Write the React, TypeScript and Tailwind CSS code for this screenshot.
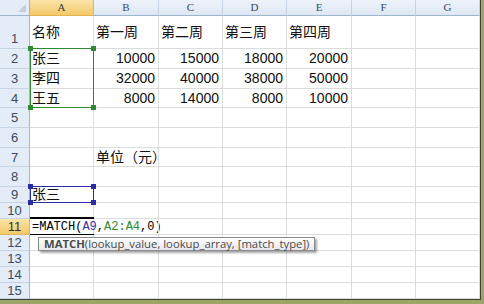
import React from 'react';

const colWidths = [30, 64, 65, 64, 64, 65, 64, 64];
const rowHeights = [33, 20, 20, 19, 20, 20, 19, 20, 16, 16, 16, 16, 16, 16, 16];
const letters = ['A', 'B', 'C', 'D', 'E', 'F', 'G'];

type Cell = { text: string; align?: 'left' | 'right' };

const data: Record<number, Record<number, Cell>> = {
  1: {
    0: { text: '名称' },
    1: { text: '第一周' },
    2: { text: '第二周' },
    3: { text: '第三周' },
    4: { text: '第四周' },
  },
  2: {
    0: { text: '张三' },
    1: { text: '10000', align: 'right' },
    2: { text: '15000', align: 'right' },
    3: { text: '18000', align: 'right' },
    4: { text: '20000', align: 'right' },
  },
  3: {
    0: { text: '李四' },
    1: { text: '32000', align: 'right' },
    2: { text: '40000', align: 'right' },
    3: { text: '38000', align: 'right' },
    4: { text: '50000', align: 'right' },
  },
  4: {
    0: { text: '王五' },
    1: { text: '8000', align: 'right' },
    2: { text: '14000', align: 'right' },
    3: { text: '8000', align: 'right' },
    4: { text: '10000', align: 'right' },
  },
  7: { 1: { text: '单位（元）' } },
  9: { 0: { text: '张三' } },
};

const cellFont = '"Liberation Sans", "Noto Sans CJK SC", sans-serif';

// little square at each corner of a reference range
const Handles: React.FC<{ color: string }> = ({ color }) => (
  <>
    <div className={`absolute -left-[3px] -top-[3px] w-[5px] h-[5px] ${color}`} />
    <div className={`absolute -right-[3px] -top-[3px] w-[5px] h-[5px] ${color}`} />
    <div className={`absolute -left-[3px] -bottom-[3px] w-[5px] h-[5px] ${color}`} />
    <div className={`absolute -right-[3px] -bottom-[3px] w-[5px] h-[5px] ${color}`} />
  </>
);

const App: React.FC = () => {
  return (
    <div className="w-[484px] h-[304px] bg-[#9ca468] overflow-hidden">
      <div className="w-[481px] h-[300px] bg-white border-r border-b border-[#3f4230]">
        <div
          className="grid"
          style={{
            gridTemplateColumns: colWidths.map((w) => `${w}px`).join(' '),
            gridTemplateRows: ['16px', ...rowHeights.map((h) => `${h}px`)].join(' '),
          }}
        >
          {/* corner */}
          <div className="col-start-1 row-start-1 bg-[#e4ecf7] border-r border-b border-[#9eb6ce] flex items-end justify-end pr-[3px] pb-[3px]">
            <svg width="8" height="8" viewBox="0 0 8 8">
              <polygon points="8,0 8,8 0,8" fill="#c3cfdd" />
            </svg>
          </div>
          {letters.map((l, i) => (
            <div
              key={l}
              className={`row-start-1 flex items-center justify-center border-r border-b text-[11px] ${
                i === 0
                  ? 'bg-gradient-to-b from-[#fbe3a8] to-[#f3c968] border-r-[#d9b66a] border-b-[#e5b250] text-[#3a3a3a]'
                  : 'bg-gradient-to-b from-[#eef3fa] to-[#dde7f3] border-r-[#c5d3e3] border-b-[#9eb6ce] text-[#3b4a60]'
              }`}
              style={{ gridColumn: i + 2, fontFamily: '"Liberation Serif", serif' }}
            >
              {l}
            </div>
          ))}
          {rowHeights.map((_, r) => {
            const row = r + 1;
            const active = row === 11;
            return (
              <React.Fragment key={row}>
                <div
                  className={`col-start-1 flex justify-center border-r border-b text-[13px] leading-none ${
                    row === 1 ? 'items-end pb-[3px]' : 'items-center'
                  } ${
                    active
                      ? 'bg-gradient-to-b from-[#fbe3a8] to-[#f3c968] border-r-[#e5b250] border-b-[#d9b66a] text-[#333]'
                      : 'bg-[#e4ecf7] border-r-[#9eb6ce] border-b-[#c5d3e3] text-[#3b4a60]'
                  }`}
                  style={{ gridRow: row + 1, fontFamily: '"Liberation Sans", sans-serif' }}
                >
                  {row}
                </div>
                {letters.map((_, c) => {
                  const cell = data[row]?.[c];
                  return (
                    <div
                      key={c}
                      className={`flex items-center border-r border-b border-[#dadcdd] text-[14px] text-[#111] whitespace-nowrap ${
                        cell?.align === 'right' ? 'justify-end pr-[3px]' : 'justify-start pl-[2px]'
                      }`}
                      style={{ gridRow: row + 1, gridColumn: c + 2, fontFamily: cellFont }}
                    >
                      {row === 11 && c === 0 ? (
                        <span
                          className="text-[12px] text-black"
                          style={{ fontFamily: '"Liberation Mono", monospace' }}
                        >
                          =MATCH(<span className="text-[#3434a8]">A9</span>,
                          <span className="text-[#2d8a2d]">A2:A4</span>,0)
                        </span>
                      ) : (
                        cell?.text
                      )}
                    </div>
                  );
                })}
              </React.Fragment>
            );
          })}

          {/* green reference range A2:A4 */}
          <div className="relative col-start-2 row-start-3 row-span-3 -mt-px border border-[#2f8a2f]">
            <Handles color="bg-[#2f8a2f]" />
          </div>

          {/* blue reference cell A9 */}
          <div className="relative col-start-2 row-start-10 -mt-px border border-[#2b2ba6]">
            <Handles color="bg-[#2b2ba6]" />
          </div>

          {/* cell being edited, A11 */}
          <div className="col-start-2 row-start-12 -mt-[2px] border-t-2 border-b border-black" />

          {/* function argument tooltip */}
          <div
            className="relative z-10 col-start-2 col-span-5 row-start-13 self-start justify-self-start mt-[2px] ml-[8px] h-[14px] px-[5px] flex items-center border border-[#8a8a8a] bg-gradient-to-b from-white to-[#e6e8ee] shadow-[2px_2px_2px_rgba(0,0,0,0.35)] text-[11.3px] text-[#4a4a4a] whitespace-nowrap leading-none"
            style={{ fontFamily: '"Open Sans", "Noto Sans", sans-serif' }}
          >
            <span className="font-bold">MATCH</span>(lookup_value, lookup_array, [match_type])
          </div>
        </div>
      </div>
    </div>
  );
};

export default App;
